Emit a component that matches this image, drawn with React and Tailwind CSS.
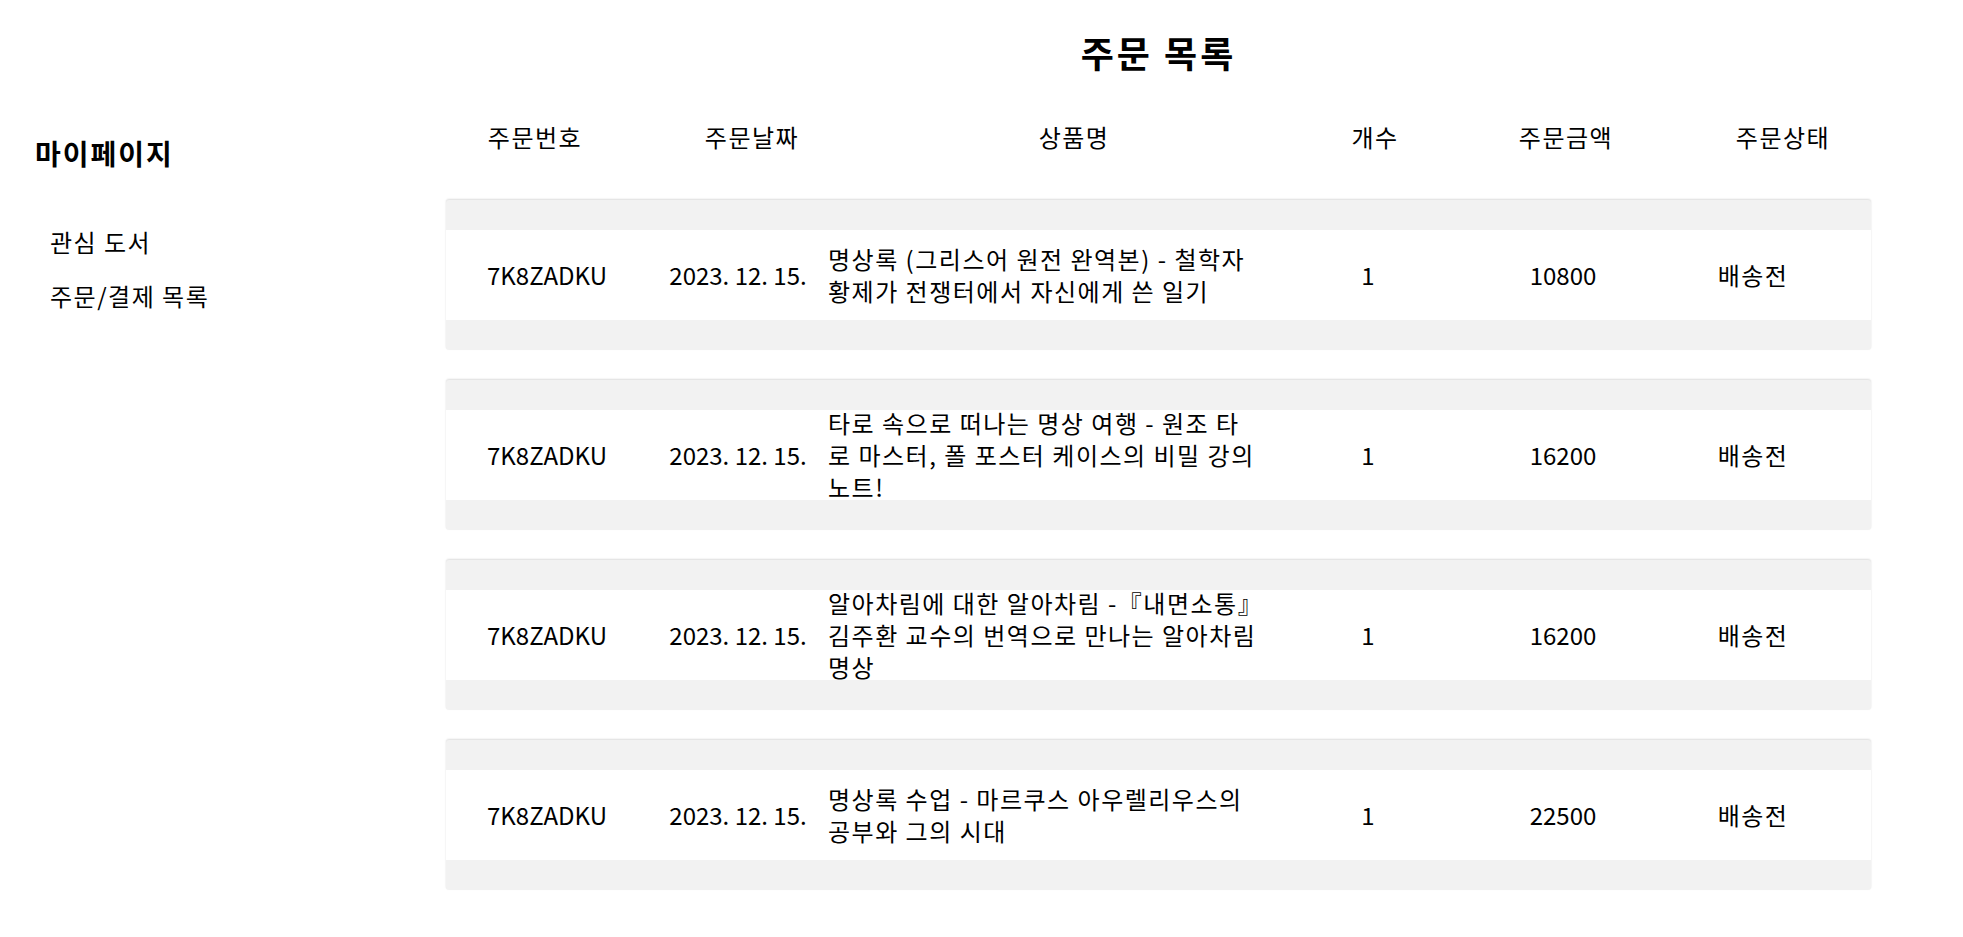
import React from "react";

const orders = [
  { id: "7K8ZADKU", date: "2023. 12. 15.", name: ["명상록 (그리스어 원전 완역본) - 철학자", "황제가 전쟁터에서 자신에게 쓴 일기"], qty: 1, price: 10800, status: "배송전" },
  { id: "7K8ZADKU", date: "2023. 12. 15.", name: ["타로 속으로 떠나는 명상 여행 - 원조 타", "로 마스터, 폴 포스터 케이스의 비밀 강의", "노트!"], qty: 1, price: 16200, status: "배송전" },
  { id: "7K8ZADKU", date: "2023. 12. 15.", name: ["알아차림에 대한 알아차림 -『내면소통』", "김주환 교수의 번역으로 만나는 알아차림", "명상"], qty: 1, price: 16200, status: "배송전" },
  { id: "7K8ZADKU", date: "2023. 12. 15.", name: ["명상록 수업 - 마르쿠스 아우렐리우스의", "공부와 그의 시대"], qty: 1, price: 22500, status: "배송전" },
];

export default function App() {
  return (
    <div
      className="flex min-h-[937px] w-[1963px] bg-white text-black"
      style={{ fontFamily: '"Noto Sans CJK KR", "Noto Sans", sans-serif' }}
    >
      <aside className="w-[446px] shrink-0 pl-[35px]">
        <h3 className="mt-[135px] text-[28px] font-bold leading-[36px] tracking-[2px]">마이페이지</h3>
        <ul className="mt-[44px] pl-[15px] text-[24px] leading-[32px] tracking-[1.5px]">
          <li className="flex h-[54px] items-center">관심 도서</li>
          <li className="flex h-[54px] items-center">주문/결제 목록</li>
        </ul>
      </aside>
      <main className="w-[1425px] shrink-0">
        <h2 className="mt-[28px] text-center text-[36px] font-bold leading-[48px] tracking-[3px]">주문 목록</h2>
        <div className="mt-[45px] flex h-[32px] text-[24px] leading-[32px] tracking-[1.5px]">
          <div className="w-[178px] shrink-0 text-center">주문번호</div>
          <div className="w-[256px] shrink-0 text-center">주문날짜</div>
          <div className="w-[388px] shrink-0 text-center">상품명</div>
          <div className="w-[214px] shrink-0 text-center">개수</div>
          <div className="w-[168px] shrink-0 text-center">주문금액</div>
          <div className="w-[266px] shrink-0 text-center">주문상태</div>
        </div>
        <div className="mt-[47px] flex flex-col gap-[30px]">
          {orders.map((o, i) => (
            <div
              key={i}
              className="rounded-[3px] bg-[#f2f2f2] py-[30px] shadow-[0_-1px_2px_rgba(0,0,0,0.14)]"
            >
              <div className="flex h-[90px] items-center bg-white text-[24px] leading-[32px]">
                <div className="w-[202px] shrink-0 text-center">{o.id}</div>
                <div className="w-[180px] shrink-0 whitespace-nowrap text-center">{o.date}</div>
                <div className="w-[440px] shrink-0 tracking-[1.5px]">
                  {o.name.map((line, j) => (
                    <div key={j} className="whitespace-nowrap">{line}</div>
                  ))}
                </div>
                <div className="w-[200px] shrink-0 text-center">{o.qty}</div>
                <div className="w-[190px] shrink-0 text-center">{o.price}</div>
                <div className="w-[190px] shrink-0 text-center tracking-[1.5px]">{o.status}</div>
              </div>
            </div>
          ))}
        </div>
      </main>
    </div>
  );
}
